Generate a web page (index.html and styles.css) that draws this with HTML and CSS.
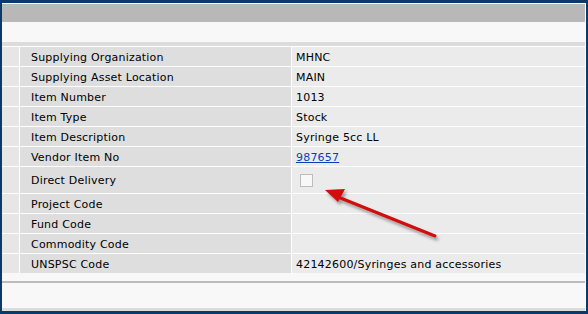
FILE: index.html
```html
<!DOCTYPE html>
<html lang="en">
<head>
    <meta charset="UTF-8">
    <title>Item Details</title>
    <link rel="stylesheet" href="styles.css">
</head>
<body>
    <div class="frame">
        <div class="inner">
            <div class="toolbar"></div>
            <div class="subbar"></div>
            <div class="strip"></div>

            <div class="details">
                <div class="side"></div><div class="label">Supplying Organization</div><div class="value">MHNC</div>
                <div class="side"></div><div class="label">Supplying Asset Location</div><div class="value">MAIN</div>
                <div class="side"></div><div class="label">Item Number</div><div class="value">1013</div>
                <div class="side"></div><div class="label">Item Type</div><div class="value">Stock</div>
                <div class="side"></div><div class="label">Item Description</div><div class="value">Syringe 5cc LL</div>
                <div class="side"></div><div class="label">Vendor Item No</div><div class="value"><a href="#">987657</a></div>
                <div class="side tall"></div><div class="label tall">Direct Delivery</div><div class="value tall"><span class="checkbox"></span></div>
                <div class="side"></div><div class="label">Project Code</div><div class="value"></div>
                <div class="side"></div><div class="label">Fund Code</div><div class="value"></div>
                <div class="side"></div><div class="label">Commodity Code</div><div class="value"></div>
                <div class="side"></div><div class="label">UNSPSC Code</div><div class="value">42142600/Syringes and accessories</div>
            </div>

            <div class="gap"></div>
            <div class="rule"></div>
            <div class="footer"></div>
            <div class="bottom-strip"></div>
        </div>

        <!-- annotation arrow drawn over the page -->
        <svg class="arrow" width="588" height="314" viewBox="0 0 588 314">
            <defs>
                <filter id="shadow" x="-20%" y="-20%" width="140%" height="160%">
                    <feGaussianBlur in="SourceAlpha" stdDeviation="1.5"/>
                    <feOffset dx="2" dy="3" result="off"/>
                    <feFlood flood-color="#000" flood-opacity="0.35"/>
                    <feComposite in2="off" operator="in" result="blur"/>
                    <feMerge>
                        <feMergeNode in="blur"/>
                        <feMergeNode in="SourceGraphic"/>
                    </feMerge>
                </filter>
            </defs>
            <g filter="url(#shadow)">
                <line x1="435" y1="236" x2="338" y2="197" stroke="#d10a0a" stroke-width="3" stroke-linecap="round"/>
                <polygon points="325,190 345,189 338,202" fill="#d10a0a"/>
            </g>
        </svg>
    </div>
</body>
</html>
```

FILE: styles.css
```css
body {
    margin: 0;
    padding: 0;
    font-family: "DejaVu Sans", Verdana, sans-serif;
    font-size: 11px;
    letter-spacing: 0.2px;
    color: #000;
}
.frame {
    position: relative;
    width: 588px;
    height: 314px;
    box-sizing: border-box;
    border-style: solid;
    border-color: #0b3a6a;
    border-width: 3px 2px 3px 2px;
    background-color: #f8f8f8;
}
.inner {
    border-top: 1px solid #fff;
    border-right: 1px solid #fff;
}
.toolbar {
    height: 18px;
    background-color: #b8b8b8;
}
.subbar {
    height: 20px;
    background-color: #f8f8f8;
}
.strip {
    height: 4px;
    background-color: #dcdcdc;
}
.details {
    display: grid;
    grid-template-columns: 17px 271px 1fr;
    gap: 1px;
    padding-top: 1px;
    background-color: #fff;
}
.side,
.label,
.value {
    height: 19px;
}
.details .tall {
    height: 26px;
}
.side {
    background-color: #e6e6e6;
}
.label {
    display: flex;
    align-items: center;
    padding-left: 11px;
    padding-top: 1px;
    box-sizing: border-box;
    background-color: #dedede;
}
.value {
    display: flex;
    align-items: center;
    padding-left: 4px;
    padding-top: 1px;
    box-sizing: border-box;
    background-color: #ebebeb;
}
.value a {
    color: #0b3fb5;
}
.checkbox {
    display: block;
    width: 11px;
    height: 11px;
    margin-left: 4px;
    border: 1px solid #bdbdbd;
    background-color: #f8f8f8;
}
.gap {
    height: 8px;
}
.rule {
    height: 2px;
    background-color: #bcbcbc;
}
.footer {
    height: 25px;
    background-color: #f8f8f8;
}
.bottom-strip {
    height: 3px;
    background-color: #dcdcdc;
}
.arrow {
    position: absolute;
    top: -3px;
    left: -2px;
    pointer-events: none;
}
```
